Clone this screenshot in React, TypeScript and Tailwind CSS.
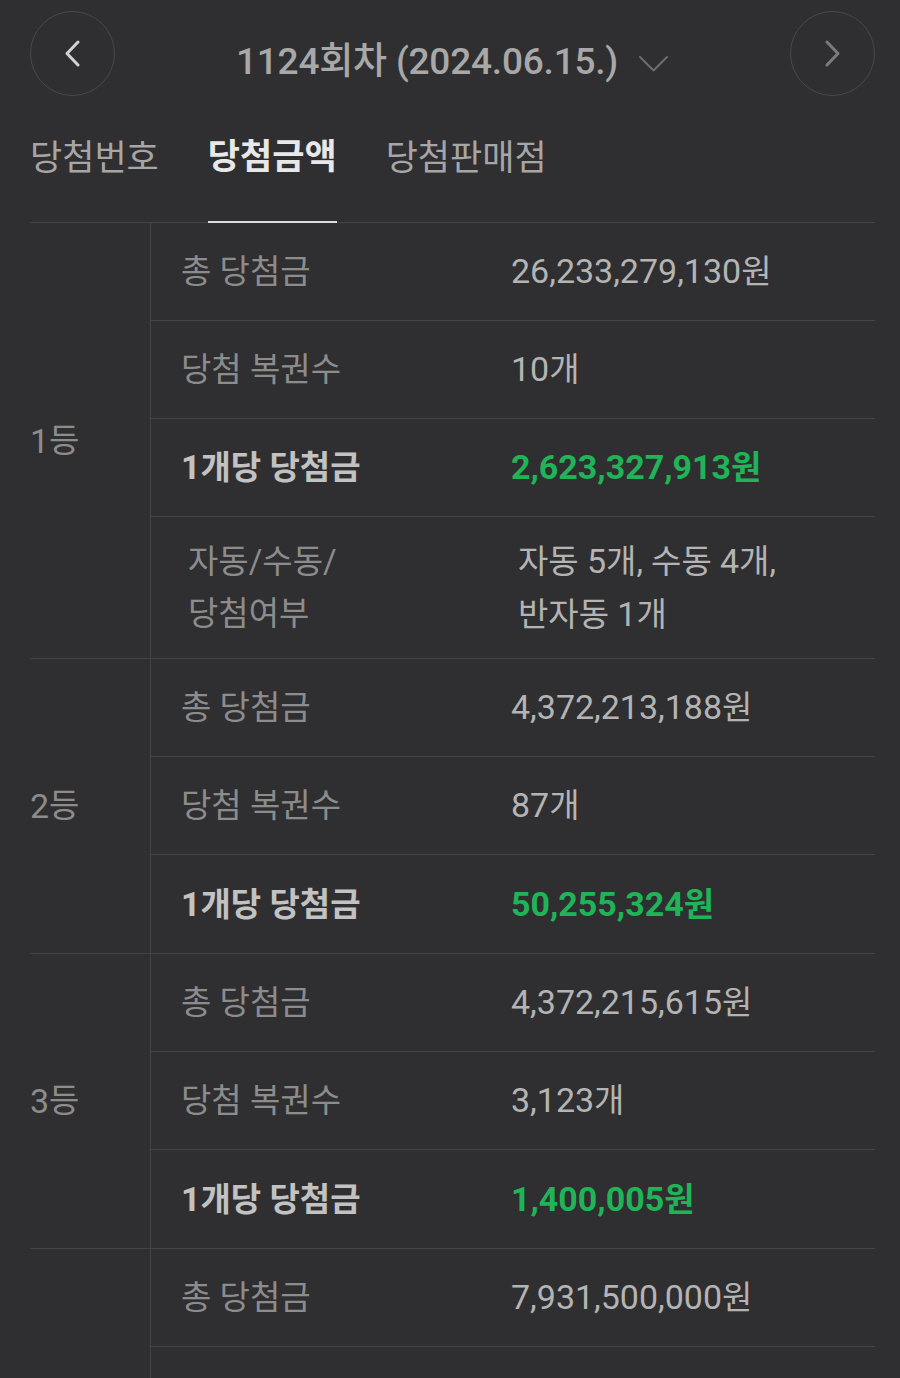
import React from "react";

interface PrizeRow {
  label: string[];
  value: string[];
  highlight?: boolean;
}

interface PrizeGroup {
  rank: string;
  rows: PrizeRow[];
}

const groups: PrizeGroup[] = [
  {
    rank: "1등",
    rows: [
      { label: ["총 당첨금"], value: ["26,233,279,130원"] },
      { label: ["당첨 복권수"], value: ["10개"] },
      { label: ["1개당 당첨금"], value: ["2,623,327,913원"], highlight: true },
      { label: ["자동/수동/", "당첨여부"], value: ["자동 5개, 수동 4개,", "반자동 1개"] },
    ],
  },
  {
    rank: "2등",
    rows: [
      { label: ["총 당첨금"], value: ["4,372,213,188원"] },
      { label: ["당첨 복권수"], value: ["87개"] },
      { label: ["1개당 당첨금"], value: ["50,255,324원"], highlight: true },
    ],
  },
  {
    rank: "3등",
    rows: [
      { label: ["총 당첨금"], value: ["4,372,215,615원"] },
      { label: ["당첨 복권수"], value: ["3,123개"] },
      { label: ["1개당 당첨금"], value: ["1,400,005원"], highlight: true },
    ],
  },
  {
    rank: "4등",
    rows: [
      { label: ["총 당첨금"], value: ["7,931,500,000원"] },
      { label: ["당첨 복권수"], value: ["158,630개"] },
      { label: ["1개당 당첨금"], value: ["50,000원"], highlight: true },
    ],
  },
];

// digits render a touch larger than the hangul next to them
function Mixed({ text }: { text: string }) {
  const parts = text.split(/([0-9][0-9,]*)/);
  return (
    <>
      {parts.map((p, i) =>
        /^[0-9]/.test(p) ? (
          <span key={i} className="text-[1.03em]">
            {p}
          </span>
        ) : (
          <span key={i}>{p}</span>
        )
      )}
    </>
  );
}

function Lines({ lines }: { lines: string[] }) {
  return (
    <div>
      {lines.map((l, i) => (
        <div key={i}>
          <Mixed text={l} />
        </div>
      ))}
    </div>
  );
}

export default function App() {
  return (
    <div className="min-h-screen bg-[#2f2f31] pl-[30px] pr-[25px] font-['Roboto','Noto_Sans_CJK_KR',sans-serif]">
      {/* header */}
      <div className="flex items-center justify-between pt-[11px]">
        <button className="flex h-[85px] w-[85px] items-center justify-center rounded-full border-[1.5px] border-[#48484a]">
          <svg width="17" height="27" viewBox="0 0 17 27" fill="none">
            <path d="M14 2 L3 13.5 L14 25" stroke="#d2d2d2" strokeWidth="3" strokeLinecap="round" strokeLinejoin="round" />
          </svg>
        </button>
        <div className="mt-[17px] flex items-center gap-[20px]">
          <span className="text-[37px] font-medium tracking-[-0.2px] text-[#a8a8a8]">1124회차 (2024.06.15.)</span>
          <svg width="31" height="18" viewBox="0 0 31 18" fill="none" className="mt-[4px]">
            <path d="M2 2 L15.5 15.5 L29 2" stroke="#6c6c6e" strokeWidth="2" strokeLinecap="round" strokeLinejoin="round" />
          </svg>
        </div>
        <button className="flex h-[85px] w-[85px] items-center justify-center rounded-full border-[1.5px] border-[#48484a]">
          <svg width="17" height="27" viewBox="0 0 17 27" fill="none">
            <path d="M3 2 L14 13.5 L3 25" stroke="#7a7a7c" strokeWidth="3" strokeLinecap="round" strokeLinejoin="round" />
          </svg>
        </button>
      </div>

      {/* tabs */}
      <div className="flex gap-[49px] border-b border-[#444446] text-[35px]">
        <div className="flex h-[126px] items-center text-[#a6a6a6]">당첨번호</div>
        <div className="-mb-px flex h-[127px] items-center border-b-2 border-[#dcdcdc] font-bold text-[#e8e8e8]">당첨금액</div>
        <div className="flex h-[126px] items-center text-[#a6a6a6]">당첨판매점</div>
      </div>

      {/* prize table */}
      <div>
        {groups.map((g) => (
          <div key={g.rank} className="flex border-b border-[#444446]">
            <div className="flex w-[121px] shrink-0 items-center border-r border-[#444446] text-[33px] leading-[40px] text-[#8c8c8c]">
              <Mixed text={g.rank} />
            </div>
            <div className="flex-1">
              {g.rows.map((r, i) => {
                const multi = r.label.length > 1;
                const last = i === g.rows.length - 1;
                return (
                  <div
                    key={i}
                    className={`flex text-[33px] ${multi ? "h-[141px] leading-[52px]" : "h-[98px] leading-[40px]"} ${
                      last ? "" : "border-b border-[#444446]"
                    }`}
                  >
                    <div
                      className={`flex w-[330px] shrink-0 items-center ${multi ? "pl-[37px]" : "pl-[30px]"} ${
                        r.highlight ? "font-bold text-[#c2c2c2]" : "text-[#8c8c8c]"
                      }`}
                    >
                      <Lines lines={r.label} />
                    </div>
                    <div
                      className={`flex flex-1 items-center ${multi ? "pl-[37px]" : "pl-[30px]"} ${
                        r.highlight ? "font-bold text-[#1fb457]" : "text-[#b4b4b4]"
                      }`}
                    >
                      <Lines lines={r.value} />
                    </div>
                  </div>
                );
              })}
            </div>
          </div>
        ))}
      </div>
    </div>
  );
}
